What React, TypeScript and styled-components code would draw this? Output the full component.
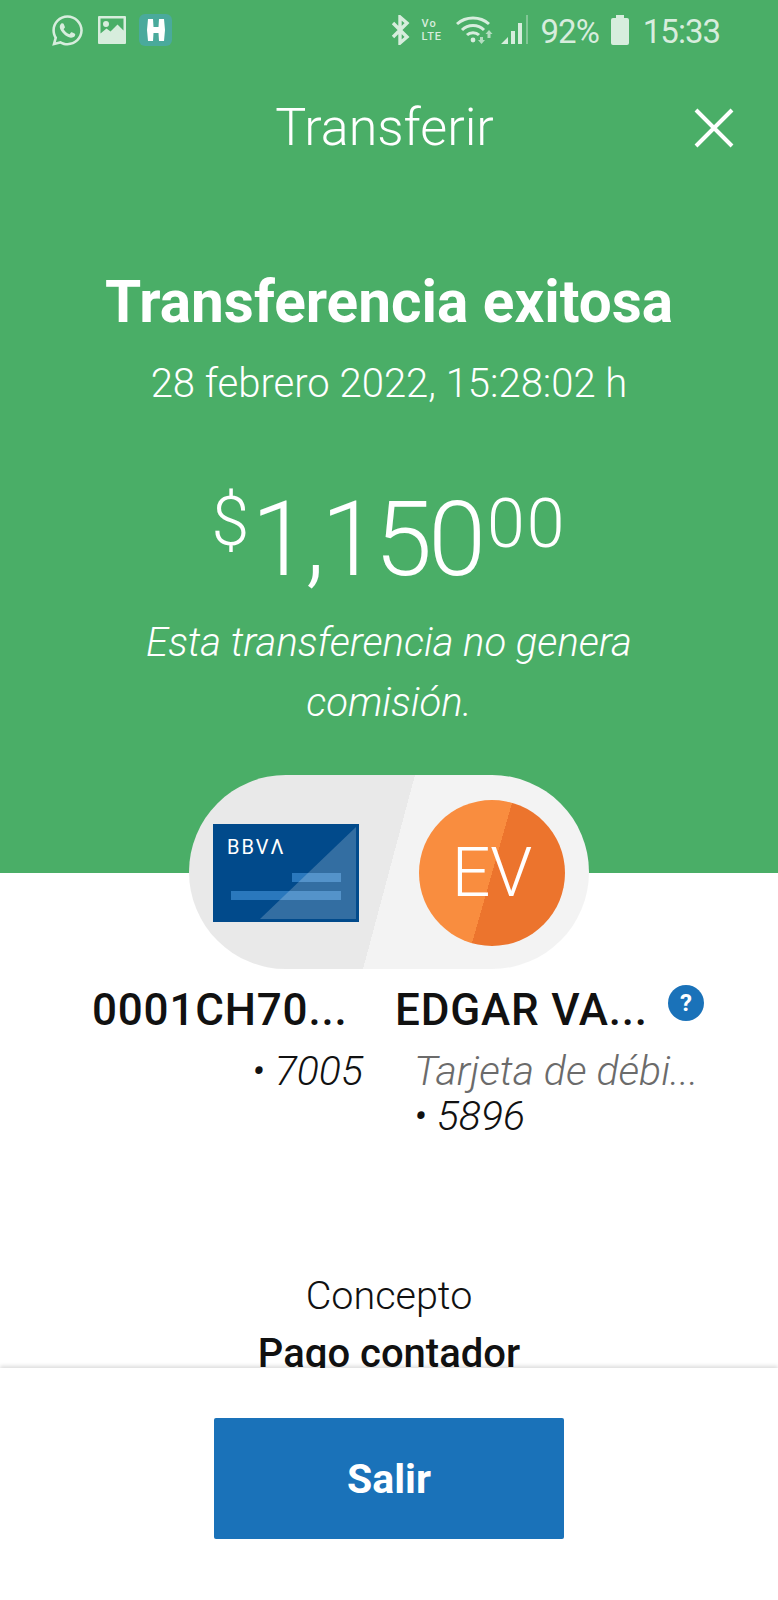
import styled, { createGlobalStyle } from 'styled-components';
import { FaWhatsapp } from 'react-icons/fa';

const GlobalStyle = createGlobalStyle`
  html, body { margin: 0; padding: 0; background: #fff; }
  * { box-sizing: border-box; }
  body { font-family: Roboto, "Liberation Sans", sans-serif; }
`;

const Screen = styled.div`
  width: 778px;
  height: 1600px;
  display: flex;
  flex-direction: column;
  overflow: hidden;
  background: #fff;
`;

const Scroller = styled.div`
  height: 1368px;
  overflow: hidden;
`;

const Hero = styled.div`
  height: 873px;
  background: #4aae67;
  color: #fff;
  display: flex;
  flex-direction: column;
  align-items: center;
`;

const StatusBar = styled.div`
  width: 100%;
  height: 60px;
  padding: 0 58px 0 50px;
  display: flex;
  align-items: center;
  justify-content: space-between;
  color: rgba(255, 255, 255, 0.78);
`;

const StatusGroup = styled.div`
  display: flex;
  align-items: center;
`;

const AppTile = styled.div`
  width: 33px;
  height: 32px;
  margin-left: 13px;
  border-radius: 6px;
  background: #4aaa9c;
  display: flex;
  align-items: center;
  justify-content: center;
`;

const VoLte = styled.div`
  width: 24px;
  margin: 0 10px 0 12px;
  font-size: 11px;
  line-height: 13px;
  font-weight: 500;
  letter-spacing: 1px;
  text-align: left;
`;

const StatusText = styled.span<{ $gap: number }>`
  margin: 3px 0 0 ${(p) => p.$gap}px;
  font-size: 33px;
  line-height: 40px;
  letter-spacing: -1px;
  color: rgba(255, 255, 255, 0.78);
`;

const TitleBar = styled.div`
  width: 100%;
  height: 70px;
  margin-top: 33px;
  display: flex;
  align-items: center;
  justify-content: center;
  position: relative;
`;

const Title = styled.h1`
  margin: 0 9px 0 0;
  font-size: 52px;
  line-height: 70px;
  font-weight: 300;
`;

const CloseButton = styled.div`
  position: absolute;
  right: 44px;
  top: 15px;
  width: 40px;
  height: 40px;
`;

const Heading = styled.h2`
  margin: 104px 0 0;
  font-size: 58.5px;
  line-height: 70px;
  font-weight: 700;
  white-space: nowrap;
`;

const DateLine = styled.div`
  margin-top: 24px;
  font-size: 40px;
  line-height: 46px;
  font-weight: 300;
`;

const Amount = styled.div`
  margin-top: 73px;
  display: flex;
  align-items: flex-start;
  font-weight: 300;
  height: 120px;
`;

const Small = styled.span<{ $spread?: boolean }>`
  margin-top: ${(p) => (p.$spread ? '2px' : '0')};
  font-size: 68px;
  line-height: 84px;
  letter-spacing: ${(p) => (p.$spread ? '2px' : '0')};
`;

const Big = styled.span`
  font-size: 104px;
  line-height: 120px;
  letter-spacing: -4px;
  margin: 0 5px 0 2px;
`;

const Note = styled.div`
  width: 560px;
  margin-top: 13px;
  font-size: 40px;
  line-height: 60px;
  font-style: italic;
  font-weight: 300;
  text-align: center;
`;

const Pill = styled.div`
  width: 400px;
  height: 194px;
  margin: -98px auto 0;
  padding: 25px 24px 23px 24px;
  border-radius: 97px;
  position: relative;
  background: linear-gradient(105deg, #e9e9e9 50%, #f3f3f3 50%);
  display: flex;
  align-items: center;
  justify-content: space-between;
`;

const BankCard = styled.svg`
  width: 146px;
  height: 98px;
  display: block;
`;

const Avatar = styled.div`
  width: 146px;
  height: 146px;
  border-radius: 50%;
  background: linear-gradient(106deg, #f98d3f 50%, #ec742d 50%);
  color: #fff;
  font-size: 68px;
  font-weight: 300;
  display: flex;
  align-items: center;
  justify-content: center;
`;

const Parties = styled.div`
  margin-top: 16px;
  display: grid;
  grid-template-columns: 363px 1fr;
  height: 286px;
  color: #111;
`;

const Party = styled.div<{ $right?: boolean }>`
  padding-left: ${(p) => (p.$right ? '32px' : '92px')};
  position: relative;
`;

const Name = styled.div`
  font-size: 44px;
  line-height: 50px;
  font-weight: 500;
  letter-spacing: 0.8px;
  white-space: nowrap;
`;

const Detail = styled.div<{ $end?: boolean; $muted?: boolean; $first?: boolean }>`
  margin-top: ${(p) => (p.$first ? '14px' : '0')};
  padding-left: 19px;
  font-size: 41px;
  line-height: 45px;
  font-style: italic;
  font-weight: 300;
  text-align: ${(p) => (p.$end ? 'right' : 'left')};
  white-space: nowrap;
  color: ${(p) => (p.$muted ? '#6b6b6b' : '#111')};
`;

const HelpBadge = styled.div`
  position: absolute;
  left: 305px;
  top: 0;
  width: 36px;
  height: 36px;
  border-radius: 50%;
  background: #1a72b9;
  color: #fff;
  font-size: 24px;
  line-height: 36px;
  font-weight: 700;
  text-align: center;
`;

const Concept = styled.div`
  text-align: center;
  color: #111;
`;

const ConceptLabel = styled.div`
  font-size: 39.5px;
  line-height: 50px;
  font-weight: 300;
`;

const ConceptValue = styled.div`
  margin-top: 8px;
  font-size: 40px;
  line-height: 50px;
  font-weight: 500;
`;

const Footer = styled.div`
  flex: 1;
  position: relative;
  padding-top: 50px;
  background: #fff;
  box-shadow: 0 -2px 4px rgba(0, 0, 0, 0.14);
  display: flex;
  justify-content: center;
  align-items: flex-start;
`;

const ExitButton = styled.button`
  width: 350px;
  height: 121px;
  border: 0;
  border-radius: 2px;
  background: #1a72b9;
  color: #fff;
  font-family: inherit;
  font-size: 41px;
  font-weight: 700;
`;

const App = () => (
  <Screen>
    <GlobalStyle />
    <Scroller>
      <Hero>
        <StatusBar>
          <StatusGroup>
            <FaWhatsapp size={35} />
            <svg width="28" height="28" viewBox="0 0 28 28" style={{ marginLeft: 13 }}>
              <path
                fill="currentColor"
                fillRule="evenodd"
                d="M1 0h26a1 1 0 0 1 1 1v26a1 1 0 0 1-1 1H1a1 1 0 0 1-1-1V1a1 1 0 0 1 1-1zm1.5 2.500v15l6-5 4 3 7-7 6 6v-12zM8 5a3 3 0 1 1 0 6 3 3 0 0 1 0-6z"
              />
            </svg>
            <AppTile>
              <svg width="18" height="22" viewBox="0 0 18 22">
                <path fill="#fff" d="M1 0h5l.5 8h5L12 0h5l1 11-1 11h-5l-.5-8h-5L6 22H1L0 11z" />
              </svg>
            </AppTile>
          </StatusGroup>
          <StatusGroup>
            <svg width="19" height="30" viewBox="0 0 19 30">
              <path
                fill="none"
                stroke="currentColor"
                strokeWidth="3.4"
                d="M2 8l14 14-7 6V2l7 6L2 22"
              />
            </svg>
            <VoLte>Vo<br />LTE</VoLte>
            <svg width="40" height="28" viewBox="0 0 40 28">
              <g fill="none" stroke="currentColor" strokeWidth="3">
                <path d="M1 8c9-8 23-8 32 0" />
                <path d="M6 14c6-6 16-6 22 0" />
                <path d="M11 19c3-3 9-3 12 0" />
              </g>
              <circle cx="17" cy="24" r="2.4" fill="currentColor" />
              <path fill="currentColor" opacity="0.75" d="M24 21h3v3h2l-3.500 4-3.500-4h2zM33 14l3.500 4h-2v4h-3v-4h-2z" />
            </svg>
            <svg width="28" height="30" viewBox="0 0 28 30" style={{ marginLeft: 5 }}>
              <path fill="currentColor" d="M0 29l7-7v7zM10 16h4v13h-4zM17 8h4v21h-4z" />
              <path fill="currentColor" opacity="0.4" d="M25 0h2v29h-2z" />
            </svg>
            <StatusText $gap={12}>92%</StatusText>
            <svg width="18" height="30" viewBox="0 0 18 30" style={{ marginLeft: 12 }}>
              <path fill="currentColor" d="M5 0h8v3h3a2 2 0 0 1 2 2v23a2 2 0 0 1-2 2H2a2 2 0 0 1-2-2V5a2 2 0 0 1 2-2h3z" />
            </svg>
            <StatusText $gap={14}>15:33</StatusText>
          </StatusGroup>
        </StatusBar>
        <TitleBar>
          <Title>Transferir</Title>
          <CloseButton>
            <svg width="40" height="40" viewBox="0 0 40 40">
              <path stroke="#fff" strokeWidth="4" d="M2 2l36 36M38 2L2 38" />
            </svg>
          </CloseButton>
        </TitleBar>
        <Heading>Transferencia exitosa</Heading>
        <DateLine>28 febrero 2022, 15:28:02 h</DateLine>
        <Amount>
          <Small>$</Small>
          <Big>1,150</Big>
          <Small $spread>00</Small>
        </Amount>
        <Note>Esta transferencia no genera comisión.</Note>
      </Hero>
      <Pill>
        <BankCard viewBox="0 0 146 98">
          <rect width="146" height="98" fill="#014a8b" />
          <rect x="79" y="49" width="49" height="9" fill="#2a78bd" />
          <rect x="18" y="67" width="110" height="9" fill="#2a78bd" />
          <path d="M143 3L47 95h96z" fill="#fff" opacity="0.2" />
          <text x="14" y="30" fill="#fff" fontSize="20" fontWeight="400" letterSpacing="2" fontFamily="Roboto, sans-serif">BBVΛ</text>
        </BankCard>
        <Avatar>EV</Avatar>
      </Pill>
      <Parties>
        <Party>
          <Name>0001CH70...</Name>
          <Detail $end $first>• 7005</Detail>
        </Party>
        <Party $right>
          <Name>EDGAR VA...</Name>
          <HelpBadge>?</HelpBadge>
          <Detail $muted $first>Tarjeta de débi...</Detail>
          <Detail>• 5896</Detail>
        </Party>
      </Parties>
      <Concept>
        <ConceptLabel>Concepto</ConceptLabel>
        <ConceptValue>Pago contador</ConceptValue>
      </Concept>
    </Scroller>
    <Footer>
      <ExitButton>Salir</ExitButton>
    </Footer>
  </Screen>
);

export default App;
